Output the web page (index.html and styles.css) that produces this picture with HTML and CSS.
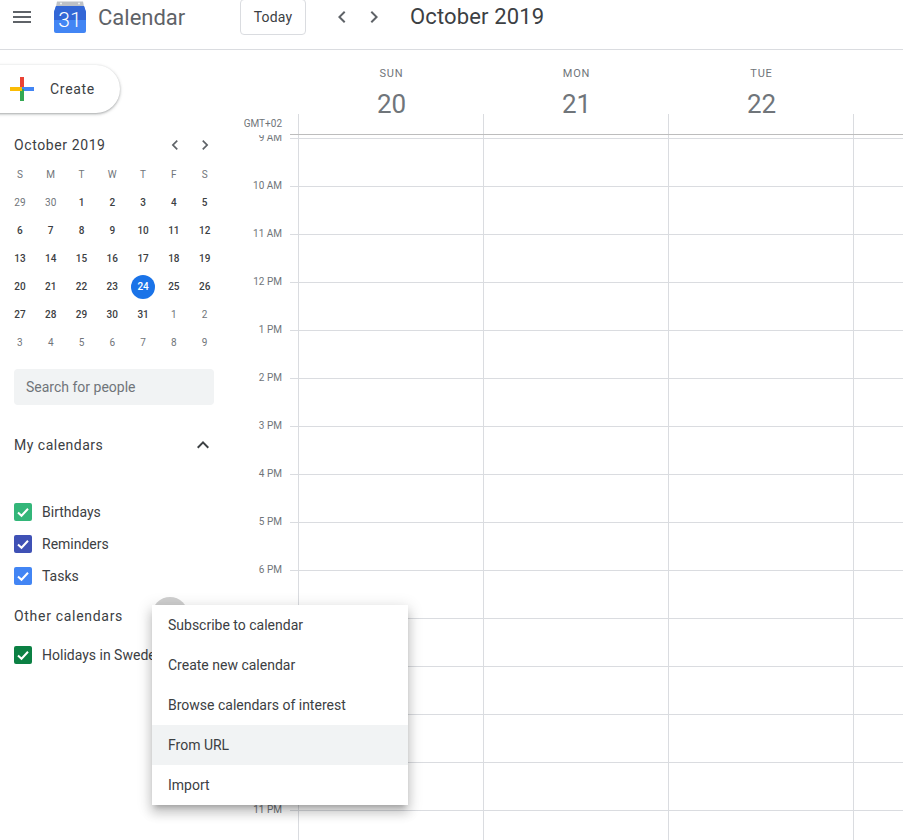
FILE: index.html
```html
<!DOCTYPE html>
<html lang="en">
<head>
<meta charset="utf-8">
<title>Calendar</title>
<link rel="stylesheet" href="styles.css">
</head>
<body>
<div class="app">
  <header class="topbar">
    <svg class="burger" width="18" height="12" viewBox="0 0 18 12"><path d="M0 0h18v2H0zM0 5h18v2H0zM0 10h18v2H0z" fill="#5f6368"/></svg>
    <svg class="logo" width="32" height="32" viewBox="0 0 32 32">
      <path d="M3 0.500h26l1 5H2z" fill="#bdc1c6"/>
      <circle cx="7" cy="2.500" r="1" fill="#f1f3f4"/><circle cx="25" cy="2.500" r="1" fill="#f1f3f4"/>
      <path d="M2 5h28l2 6v19a2 2 0 0 1-2 2H2a2 2 0 0 1-2-2V11z" fill="#4285f4"/>
      <path d="M2 5h28l2 6v8H0v-8z" fill="#3367d6"/>
      <text x="16" y="26" class="logo-num">31</text>
    </svg>
    <span class="brand">Calendar</span>
    <button class="today">Today</button>
    <svg class="nav nav-prev" width="24" height="24" viewBox="0 0 24 24"><path d="M15.410 7.410 14 6l-6 6 6 6 1.410-1.410L10.830 12z" fill="#5f6368"/></svg>
    <svg class="nav nav-next" width="24" height="24" viewBox="0 0 24 24"><path d="M8.590 16.590 10 18l6-6-6-6-1.410 1.410L13.170 12z" fill="#5f6368"/></svg>
    <h1 class="title">October 2019</h1>
  </header>
  <div class="body">
    <aside class="sidebar">
      <button class="create">
        <svg width="24" height="24" viewBox="0 0 24 24">
          <path d="M10 0h4v12h-4z" fill="#ea4335"/>
          <path d="M12 10h12v4H12z" fill="#4285f4"/>
          <path d="M10 12h4v12h-4z" fill="#34a853"/>
          <path d="M0 10h12v4H0z" fill="#fbbc05"/>
        </svg>
        <span>Create</span>
      </button>
      <div class="mini-head">
        <span class="mini-title">October 2019</span>
        <svg class="mini-prev" width="20" height="20" viewBox="0 0 24 24"><path d="M15.410 7.410 14 6l-6 6 6 6 1.410-1.410L10.830 12z" fill="#5f6368"/></svg>
        <svg class="mini-next" width="20" height="20" viewBox="0 0 24 24"><path d="M8.590 16.590 10 18l6-6-6-6-1.410 1.410L13.170 12z" fill="#5f6368"/></svg>
      </div>
      <div class="mini-grid">
        <span class="dow">S</span><span class="dow">M</span><span class="dow">T</span><span class="dow">W</span><span class="dow">T</span><span class="dow">F</span><span class="dow">S</span>
        <span class="muted">29</span><span class="muted">30</span><span>1</span><span>2</span><span>3</span><span>4</span><span>5</span>
        <span>6</span><span>7</span><span>8</span><span>9</span><span>10</span><span>11</span><span>12</span>
        <span>13</span><span>14</span><span>15</span><span>16</span><span>17</span><span>18</span><span>19</span>
        <span>20</span><span>21</span><span>22</span><span>23</span><span><b class="now">24</b></span><span>25</span><span>26</span>
        <span>27</span><span>28</span><span>29</span><span>30</span><span>31</span><span class="muted">1</span><span class="muted">2</span>
        <span class="muted">3</span><span class="muted">4</span><span class="muted">5</span><span class="muted">6</span><span class="muted">7</span><span class="muted">8</span><span class="muted">9</span>
      </div>
      <div class="search">Search for people</div>
      <div class="section my">
        <span>My calendars</span>
        <svg width="24" height="24" viewBox="0 0 24 24"><path d="M12 8l-6 6 1.410 1.410L12 10.830l4.590 4.580L18 14z" fill="#3c4043"/></svg>
      </div>
      <ul class="cals cals-my">
        <li><span class="check green"><svg width="18" height="18" viewBox="0 0 18 18"><path d="M4 9.500l3.500 3.300L14 5.800" class="tick"/></svg></span>Birthdays</li>
        <li><span class="check indigo"><svg width="18" height="18" viewBox="0 0 18 18"><path d="M4 9.500l3.500 3.300L14 5.800" class="tick"/></svg></span>Reminders</li>
        <li><span class="check blue"><svg width="18" height="18" viewBox="0 0 18 18"><path d="M4 9.500l3.500 3.300L14 5.800" class="tick"/></svg></span>Tasks</li>
      </ul>
      <div class="section other">
        <span>Other calendars</span>
        <i class="add-hover"></i>
      </div>
      <ul class="cals cals-other">
        <li><span class="check forest"><svg width="18" height="18" viewBox="0 0 18 18"><path d="M4 9.500l3.500 3.300L14 5.800" class="tick"/></svg></span>Holidays in Sweden</li>
      </ul>
      <div class="legal">Terms – Privacy</div>
    </aside>
    <main class="main">
      <div class="days">
        <div class="gmt">GMT+02</div>
        <div class="day"><div class="dname">SUN</div><div class="dnum">20</div></div>
        <div class="day"><div class="dname">MON</div><div class="dnum">21</div></div>
        <div class="day"><div class="dname">TUE</div><div class="dnum">22</div></div>
      </div>
      <div class="hours">
        <div class="hour"><span>9 AM</span><i></i></div>
        <div class="hour"><span>10 AM</span><i></i></div>
        <div class="hour"><span>11 AM</span><i></i></div>
        <div class="hour"><span>12 PM</span><i></i></div>
        <div class="hour"><span>1 PM</span><i></i></div>
        <div class="hour"><span>2 PM</span><i></i></div>
        <div class="hour"><span>3 PM</span><i></i></div>
        <div class="hour"><span>4 PM</span><i></i></div>
        <div class="hour"><span>5 PM</span><i></i></div>
        <div class="hour"><span>6 PM</span><i></i></div>
        <div class="hour"><span></span><i></i></div>
        <div class="hour"><span></span><i></i></div>
        <div class="hour"><span></span><i></i></div>
        <div class="hour"><span></span><i></i></div>
        <div class="hour"><span>11 PM</span><i></i></div>
      </div>
    </main>
  </div>
  <div class="menu">
    <div class="item">Subscribe to calendar</div>
    <div class="item">Create new calendar</div>
    <div class="item">Browse calendars of interest</div>
    <div class="item active">From URL</div>
    <div class="item">Import</div>
  </div>
</div>
</body>
</html>
```
FILE: styles.css
```css
* { box-sizing: border-box; }
html, body { margin: 0; height: 840px; overflow: hidden; background: #fff; }
body { font-family: Roboto, "Liberation Sans", sans-serif; color: #3c4043; }
.app { position: relative; width: 903px; height: 840px; overflow: hidden; display: flex; flex-direction: column; }

.topbar { height: 50px; flex: none; display: flex; align-items: flex-start; border-bottom: 1px solid #dadce0; padding-left: 13px; }
.burger { margin-top: 11px; }
.logo { margin-top: 1px; margin-left: 23px; }
.logo-num { font: 300 21px Roboto, sans-serif; fill: #fff; text-anchor: middle; }
.brand { width: 86px; margin-left: 12px; margin-top: 4px; font-size: 22px; line-height: 28px; color: #5f6368; }
.today { margin-left: 56px; margin-top: -1px; width: 66px; height: 36px; border: 1px solid #dadce0; border-radius: 4px; background: #fff; font: 400 14px Roboto, sans-serif; letter-spacing: .2px; color: #3c4043; padding: 0; }
.nav { margin-top: 5px; }
.nav-prev { margin-left: 24px; }
.nav-next { margin-left: 8px; }
.title { margin: 3px 0 0 24px; font-size: 22px; line-height: 28px; font-weight: 400; color: #3c4043; letter-spacing: .15px; }

.body { flex: 1; display: flex; min-height: 0; }
.sidebar { width: 238px; flex: none; overflow: hidden; }

.create { display: flex; align-items: center; gap: 16px; margin: 15px 0 0 -24px; width: 144px; height: 48px; padding: 0 0 0 34px; border: 0; border-radius: 24px; background: #fff; box-shadow: 0 1px 2px 0 rgba(60,64,67,.3), 0 1px 3px 1px rgba(60,64,67,.15); font: 400 14px Roboto, sans-serif; color: #3c4043; letter-spacing: .7px; }

.mini-head { display: flex; align-items: center; height: 24px; margin-top: 20px; padding-left: 14px; }
.mini-title { font-size: 14px; font-weight: 400; letter-spacing: .6px; color: #3c4043; width: 151px; }
.mini-next { margin-left: 10px; }
.mini-grid { display: grid; grid-template-columns: repeat(7, 30.800px); grid-auto-rows: 28px; margin: 3px 0 0 4.500px; }
.mini-grid span { display: flex; align-items: center; justify-content: center; font-size: 10px; font-weight: 500; color: #3c4043; }
.mini-grid .dow { color: #70757a; font-weight: 400; }
.mini-grid .muted { color: #70757a; font-weight: 400; }
.now { display: flex; align-items: center; justify-content: center; width: 24px; height: 24px; border-radius: 50%; background: #1a73e8; color: #fff; font-weight: 500; margin-top: 1px; }

.search { width: 200px; height: 36px; margin: 13px 0 0 14px; padding-left: 12px; border-radius: 4px; background: #f1f3f4; font-size: 14px; line-height: 36px; color: #70757a; }

.section { display: flex; align-items: center; justify-content: space-between; height: 24px; padding: 0 23px 0 14px; font-size: 14px; font-weight: 400; color: #3c4043; position: relative; }
.my { margin-top: 28px; letter-spacing: .5px; }
.other { margin-top: 12px; letter-spacing: .7px; }
.add-hover { position: absolute; left: 152px; top: -7px; width: 36px; height: 36px; border-radius: 50%; background: #cfcfcf; }

.cals { list-style: none; margin: 0; padding: 0; }
.cals-my { margin-top: 39px; }
.cals-other { margin-top: 11px; }
.cals li { display: flex; align-items: center; height: 32px; padding-left: 14px; font-size: 14px; color: #3c4043; white-space: nowrap; }
.check { width: 18px; height: 18px; border-radius: 2px; margin-right: 10px; display: block; }
.check svg { display: block; }
.tick { fill: none; stroke: #fff; stroke-width: 2; }
.green { background: #33b679; }
.indigo { background: #3f51b5; }
.blue { background: #4285f4; }
.forest { background: #0b8043; }

.legal { margin-top: 166px; padding-left: 14px; font-size: 12px; line-height: 16px; color: #70757a; }

.main { flex: 1; min-width: 0; overflow: hidden; display: flex; flex-direction: column; }
.days { flex: none; display: flex; height: 85px; padding-top: 17px; background: linear-gradient(#bdbdbd, #bdbdbd) 52px bottom / 100% 1px no-repeat, repeating-linear-gradient(90deg, #dadce0 0 1px, transparent 1px 185px) 60px bottom / 100% 21px no-repeat; }
.gmt { width: 60px; padding-right: 16px; margin-top: auto; margin-bottom: 4px; text-align: right; font-size: 10px; line-height: 14px; color: #70757a; }
.day { width: 185px; flex: none; padding-left: 2px; text-align: center; }
.dname { font-size: 11px; line-height: 14px; font-weight: 400; letter-spacing: .8px; color: #70757a; }
.dnum { margin-top: 5px; font-size: 26px; line-height: 36px; color: #70757a; }

.hours { flex: 1; overflow: hidden; padding-top: 3px; background: repeating-linear-gradient(90deg, #dadce0 0 1px, transparent 1px 185px) 60px 0 / 100% 100% no-repeat; }
.hour { display: flex; height: 48px; }
.hour span { width: 44px; margin-top: -8px; height: 16px; text-align: right; font-size: 10px; line-height: 16px; color: #70757a; white-space: nowrap; }
.hour i { flex: 1; margin-left: 8px; height: 1px; background: #dadce0; }

.menu { position: absolute; left: 152px; top: 605px; width: 256px; height: 200px; background: #fff; box-shadow: 0 8px 10px 1px rgba(0,0,0,.14), 0 3px 14px 2px rgba(0,0,0,.12), 0 5px 5px -3px rgba(0,0,0,.2); }
.item { height: 40px; padding-left: 16px; font-size: 14px; line-height: 40px; color: #3c4043; }
.active { background: #f1f3f4; }
```
